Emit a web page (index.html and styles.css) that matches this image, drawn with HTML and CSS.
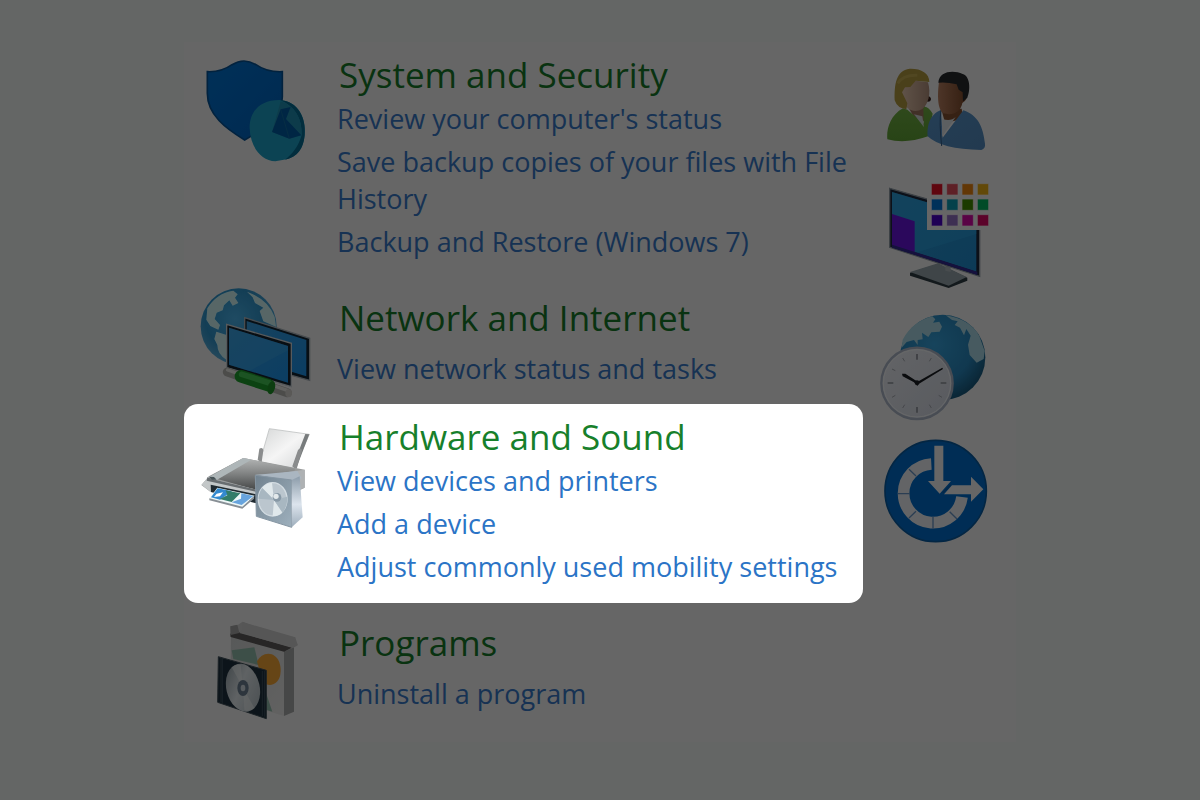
FILE: index.html
```html
<!DOCTYPE html>
<html lang="en">
<head>
<meta charset="utf-8">
<title>Control Panel</title>
<link rel="stylesheet" href="styles.css">
</head>
<body>
<main class="panel">
  <div class="categories">
    <section class="category">
      <svg class="icon icon-tall" viewBox="18 6 360 384" aria-hidden="true">
        <defs><linearGradient id="sh" x1="0" y1="0" x2="1" y2="1"><stop offset="0" stop-color="#0079dc"/><stop offset="1" stop-color="#0068c8"/></linearGradient></defs>
        <path d="M52 95Q94 97 126 74Q162 52 198 74Q230 97 277 95V170C277 230 220 268 164 300C108 266 52 225 52 160Z" fill="url(#sh)" stroke="#07569b" stroke-width="5"/>
        <path d="M270 180C325 184 349 235 344 285C340 330 316 350 290 358L256 364C212 362 181 320 179 265C178 215 210 179 270 180Z" fill="#1fa9d0"/>
        <path d="M270 180C325 184 349 235 344 285C340 335 315 353 285 359C307 342 325 320 335 285C337 235 314 198 270 180Z" fill="#06709a"/>
        <path d="M272 184C314 198 337 235 334 286L298 296L246 276Z" fill="#2195b8"/>
        <path d="M272 208L302 201L288 237L334 286L298 296L246 276Z" fill="#005fab"/>
        <path d="M272 208L298 296" stroke="#187aa8" stroke-width="2"/>
      </svg>
      <div class="category-text">
        <h2><a href="#system">System and Security</a></h2>
        <ul>
          <li><a href="#status">Review your computer's status</a></li>
          <li><a href="#history">Save backup copies of your files with File History</a></li>
          <li><a href="#backup">Backup and Restore (Windows 7)</a></li>
        </ul>
      </div>
    </section>

    <section class="category category-compact">
      <svg class="icon bright" viewBox="18 30 360 336" aria-hidden="true">
        <defs>
          <radialGradient id="gl" cx=".45" cy=".4" r=".65"><stop offset="0" stop-color="#3c90bd"/><stop offset=".6" stop-color="#2678a4"/><stop offset="1" stop-color="#5794b4"/></radialGradient>
          <linearGradient id="scr" x1="0" y1="0" x2="1" y2="1"><stop offset="0" stop-color="#2c80b5"/><stop offset="1" stop-color="#1676bd"/></linearGradient>
        </defs>
        <circle cx="146" cy="154" r="114" fill="url(#gl)"/>
        <path d="M52 100Q80 54 130 47L143 58L135 68L145 84L128 92L118 76L102 91L98 106L80 113L74 132L90 150L85 164L61 153L49 134ZM79 170L110 180V255Q82 238 82 210L73 192ZM171 50Q235 73 254 126L258 155L220 139L209 108L220 98L195 84L188 67Z" fill="#a8cbd5"/>
        <path d="M164 128L359 190V316L164 262Z" fill="#0e1d29" stroke="#8a9298" stroke-width="4"/>
        <path d="M170 138L349 195V304L170 250Z" fill="url(#scr)"/>
        <path d="M110 148L304 205V335L110 278Z" fill="#101c26" stroke="#a7adb0" stroke-width="4"/>
        <path d="M117 158L294 213V323L117 269Z" fill="url(#scr)"/>
        <path d="M117 158L294 213V226L178 288L117 269Z" fill="#338abd" opacity=".45"/>
        <path d="M112 291L292 353" stroke="#92928f" stroke-width="27" stroke-linecap="round"/>
        <path d="M113 285L292 346" stroke="#bdbdb9" stroke-width="10" stroke-linecap="round"/>
        <path d="M153 304L236 331" stroke="#188023" stroke-width="38" stroke-linecap="round"/>
        <path d="M155 298L238 324" stroke="#36a044" stroke-width="17" stroke-linecap="round"/>
        <ellipse cx="244" cy="338" rx="11" ry="20" fill="#19761f" transform="rotate(15 244 338)"/>
        <ellipse cx="296" cy="355" rx="10" ry="12" fill="#adaba7"/>
      </svg>
      <div class="category-text">
        <h2><a href="#network">Network and Internet</a></h2>
        <ul><li><a href="#network-status">View network status and tasks</a></li></ul>
      </div>
    </section>

    <section class="category spotlight">
      <svg class="icon icon-tall" viewBox="48 12 360 384" aria-hidden="true">
        <defs>
          <linearGradient id="lid" x1="0" y1="0" x2="0" y2="1"><stop offset="0" stop-color="#b3b5b5"/><stop offset=".45" stop-color="#858787"/><stop offset="1" stop-color="#454747"/></linearGradient>
          <linearGradient id="paper" x1="0" y1="0" x2="1" y2="1"><stop offset="0" stop-color="#d5d7d7"/><stop offset=".5" stop-color="#f5f5f5"/><stop offset="1" stop-color="#d2d4d5"/></linearGradient>
          <linearGradient id="spk" x1="0" y1="0" x2="1" y2="1"><stop offset="0" stop-color="#71828f"/><stop offset="1" stop-color="#9eb0bd"/></linearGradient>
          <linearGradient id="side" x1="0" y1="0" x2="0" y2="1"><stop offset="0" stop-color="#8c9caa"/><stop offset=".55" stop-color="#dce4ed"/><stop offset="1" stop-color="#9eaebc"/></linearGradient>
        </defs>
        <path d="M268 86L388 103L342 205L239 188Z" fill="url(#paper)" stroke="#b4b6b6" stroke-width="2"/>
        <path d="M388 103L348 206L338 200L376 102Z" fill="#777b7c"/>
        <path d="M233 180L238 146Q248 140 250 151L245 187ZM337 199L354 150Q364 141 366 151L350 207Z" fill="#8a8c8d"/>
        <path d="M64 255L88 228L190 174L374 209V263L330 285L245 310L232 291L92 276Z" fill="#999b9b"/>
        <path d="M88 230L190 174L347 206L327 238L230 270Z" fill="url(#lid)"/>
        <path d="M88 230L190 174L214 179L110 240Z" fill="#aeb6b8"/>
        <path d="M65 254L86 229L112 241L230 269V292L93 256V277Z" fill="#c3c7c8"/>
        <path d="M82 232L108 240L230 269V276L80 242Z" fill="#686d70"/>
        <path d="M92 254L230 283V310L93 276Z" fill="#202a30"/>
        <path d="M86 230L102 231L110 239L96 239Z" fill="#475357"/>
        <path d="M310 218L374 209V263L334 278Z" fill="#aeb1b3"/>
        <path d="M112 263L224 287L187 323L88 295Z" fill="#edf7f7"/>
        <path d="M113 265L156 274L120 299L93 292Z" fill="#3389cf"/>
        <path d="M137 271L181 280L155 306L119 297L142 286Z" fill="#327c69"/>
        <path d="M184 280L220 288L185 315L155 307L183 296Z" fill="#68a4dd"/>
        <path d="M110 281L129 277L120 289L102 291Z" fill="#fff"/>
        <path d="M88 295L187 320L222 289V296L187 326L88 301Z" fill="#888f95"/>
        <path d="M225 224L256 222L352 213L365 235L334 242Z" fill="#aab6c1"/>
        <path d="M226 226L335 240V382L229 349Z" fill="url(#spk)" stroke="#8595a2" stroke-width="3"/>
        <path d="M335 240L359 229L368 352L335 382Z" fill="url(#side)"/>
        <ellipse cx="278" cy="298" rx="43" ry="50" fill="#bbc6ce" stroke="#d3dce2" stroke-width="4"/>
        <path d="M282 300L246 264A43 50 0 0 1 276 248ZM282 300L307 338A43 50 0 0 1 278 348Z" fill="#e0e8eb"/>
        <path d="M282 300L235 296Q238 274 247 264ZM282 300L321 290Q325 315 308 338Z" fill="#a8b7c1"/>
        <circle cx="291" cy="292" r="13" fill="#8798a5"/><circle cx="288" cy="289" r="8" fill="#e3e9eb"/>
      </svg>
      <div class="category-text">
        <h2><a href="#hardware">Hardware and Sound</a></h2>
        <ul>
          <li><a href="#devices">View devices and printers</a></li>
          <li><a href="#add">Add a device</a></li>
          <li><a href="#mobility">Adjust commonly used mobility settings</a></li>
        </ul>
      </div>
    </section>

    <section class="category category-compact">
      <svg class="icon bright" viewBox="-12 30 360 336" aria-hidden="true">
        <defs>
          <linearGradient id="box" x1="0" y1="0" x2="1" y2="1"><stop offset="0" stop-color="#a8aaaa"/><stop offset="1" stop-color="#bcbcbb"/></linearGradient>
          <linearGradient id="disc" x1="0" y1="0" x2="1" y2="1"><stop offset="0" stop-color="#737e84"/><stop offset=".45" stop-color="#b7bdc0"/><stop offset="1" stop-color="#8c969b"/></linearGradient>
        </defs>
        <path d="M93 108L252 153V348L91 298Z" fill="url(#box)"/>
        <path d="M252 153L282 141V335L252 348Z" fill="#878989"/>
        <path d="M91 79L113 75L128 65L294 132L292 137L256 154L91 111Z" fill="#a7a7a7"/>
        <path d="M91 101L118 97L275 143L252 155L92 111Z" fill="#4b4949"/>
        <path d="M128 66L286 112L292 132L281 143L118 99L127 88Z" fill="#a5a5a5"/>
        <path d="M91 79L112 74L118 99L92 105Z" fill="#858585"/>
        <path d="M95 151L163 142L176 195L100 177ZM190 255L217 335L193 328Z" fill="#76988a"/>
        <path d="M205 161C235 162 247 196 240 228C233 254 208 263 187 246L171 184Q183 161 205 161Z" fill="#c4842c"/>
        <path d="M55 170L199 211V356L53 307Z" fill="#192832" stroke="#35424a" stroke-width="3"/>
        <path d="M63 174V307M67 174V309M187 213V348M194 213V350" stroke="#3c4b56" stroke-width="2"/>
        <ellipse cx="129" cy="263" rx="50" ry="73" fill="url(#disc)" transform="rotate(-13 129 263)"/>
        <path d="M129 263L95 202Q109 190 122 195ZM129 263L163 324Q148 338 133 329Z" fill="#c4c8c8" opacity=".55"/>
        <ellipse cx="129" cy="264" rx="17" ry="24" fill="#576775"/><ellipse cx="129" cy="264" rx="7" ry="10" fill="#a8afb4"/>
      </svg>
      <div class="category-text">
        <h2><a href="#programs">Programs</a></h2>
        <ul><li><a href="#uninstall">Uninstall a program</a></li></ul>
      </div>
    </section>
  </div>

  <nav class="shortcuts" aria-label="More categories">
    <a href="#accounts" aria-label="User Accounts">
      <svg class="bright" viewBox="30 0 360 360" width="120" height="120">
        <defs>
          <linearGradient id="f1" x1="0" x2="1"><stop offset="0" stop-color="#bba28e"/><stop offset="1" stop-color="#8e7363"/></linearGradient>
          <linearGradient id="f2" x1="0" x2="1"><stop offset="0" stop-color="#94664d"/><stop offset="1" stop-color="#623920"/></linearGradient>
          <linearGradient id="gr" x1="0" y1="0" x2="0" y2="1"><stop offset="0" stop-color="#5b8d36"/><stop offset="1" stop-color="#4d822b"/></linearGradient>
          <linearGradient id="bl" x1="0" y1="0" x2="1" y2="1"><stop offset="0" stop-color="#4677a3"/><stop offset="1" stop-color="#426f98"/></linearGradient>
        </defs>
        <path d="M172 136Q189 144 180 154Q170 158 163 149Z" fill="#2c1913"/>
        <path d="M113 169L164 163V214L133 203Z" fill="#7e5d4b"/>
        <path d="M99 175C60 196 49 238 52 268Q107 283 174 259L188 191Q173 166 160 171L161 221L112 179Z" fill="url(#gr)"/>
        <path d="M132 193L157 199L162 232Z" fill="#a7adab"/>
        <path d="M174 97C184 131 174 164 157 177Q132 191 109 171L91 125L113 89Z" fill="url(#f1)"/>
        <path d="M178 96C178 69 153 55 119 56C77 62 73 104 74 151Q82 175 109 178L112 160L96 127L105 112L121 111L137 92Z" fill="#8e7b33"/>
        <path d="M83 100Q100 74 142 76" stroke="#a89650" stroke-width="9" fill="none" opacity=".5"/>
        <path d="M214 178L275 176L280 207L225 218Z" fill="#684027"/>
        <path d="M213 180C177 194 171 229 173 259Q214 298 334 300Q347 295 345 281C339 230 325 197 280 181L218 263Z" fill="url(#bl)"/>
        <path d="M217 207Q243 215 257 201L216 260Z" fill="#b2b7bb"/>
        <path d="M213 181Q207 218 215 288" stroke="#294b6d" stroke-width="3" fill="none"/>
        <path d="M207 96L274 82L291 125Q294 149 277 159C272 186 249 198 220 190C202 179 202 132 207 96Z" fill="url(#f2)"/>
        <path d="M205 98C207 62 252 59 278 72C301 79 302 119 292 143L279 154L278 127L266 119L260 103Q229 95 205 98Z" fill="#1f2124"/>
      </svg>
    </a>
    <a href="#appearance" aria-label="Appearance and Personalization">
      <svg class="bright" viewBox="30 0 360 390" width="120" height="130">
        <defs><linearGradient id="mon" x1="0" y1="0" x2="1" y2="1"><stop offset="0" stop-color="#247cac"/><stop offset="1" stop-color="#1970a6"/></linearGradient></defs>
        <path d="M120 308L204 282L292 323V332L236 354L120 317Z" fill="#263137"/>
        <path d="M120 306L204 280L290 321L236 347Z" fill="#7a858a"/>
        <path d="M226 280H242V306L226 302Z" fill="#8a9397"/>
        <path d="M59 55L329 132V319L59 232Z" fill="#171f30" stroke="#747d85" stroke-width="4"/>
        <path d="M66 66L319 140V305L66 225Z" fill="url(#mon)"/>
        <path d="M319 140V192L135 249L66 225V66Z" fill="#268ab8" opacity=".4"/>
        <path d="M66 132L134 154V248L66 225Z" fill="#5310b2"/>
        <path d="M66 224L322 305V315L66 233Z" fill="#292175"/>
        <path d="M171 28H369V180H171Z" fill="#c6c6c6"/>
        <g stroke="#d1c5c8" stroke-width="2">
          <path fill="#b60d1e" d="M184 41h34v34h-34z"/><path fill="#b53e4a" d="M230 41h34v34h-34z"/><path fill="#bd6b0d" d="M276 41h34v34h-34z"/><path fill="#bc8c12" d="M322 41h34v34h-34z"/>
          <path fill="#005fac" d="M184 87h34v34h-34z"/><path fill="#087e91" d="M230 87h34v34h-34z"/><path fill="#347000" d="M276 87h34v34h-34z"/><path fill="#00914c" d="M322 87h34v34h-34z"/>
          <path fill="#3a00a1" d="M184 134h34v34h-34z"/><path fill="#765a9e" d="M230 134h34v34h-34z"/><path fill="#ab0784" d="M276 134h34v34h-34z"/><path fill="#af0751" d="M322 134h34v34h-34z"/>
        </g>
      </svg>
    </a>
    <a href="#clock" aria-label="Clock and Region">
      <svg class="bright" viewBox="30 0 360 375" width="120" height="125">
        <defs>
          <radialGradient id="gc" cx=".4" cy=".35" r=".7"><stop offset="0" stop-color="#2c83b1"/><stop offset=".65" stop-color="#206c98"/><stop offset="1" stop-color="#12445f"/></radialGradient>
          <linearGradient id="face" x1="0" y1="0" x2="1" y2="1"><stop offset="0" stop-color="#bec0c5"/><stop offset="1" stop-color="#aaaeb6"/></linearGradient>
        </defs>
        <circle cx="218" cy="172" r="128" fill="url(#gc)"/>
        <path d="M98 119Q127 65 187 49L196 58L189 68L208 65L216 80L209 95L184 97L175 111L156 98L158 118L143 120V135L132 120L110 126L95 143ZM227 46Q301 58 328 108L344 153L341 177L320 188L299 165L294 134L302 107L289 87L282 106L270 83L254 75L263 64L246 60Z" fill="#88aeb8"/>
        <circle cx="141" cy="250" r="107" fill="url(#face)" stroke="#8a92a0" stroke-width="7"/>
        <circle cx="141" cy="250" r="101" fill="none" stroke="#c5c8ce" stroke-width="3"/>
        <g stroke="#72757c" stroke-width="5"><path d="M141 162V179M141 321V338M53 249H70M212 249H229"/></g>
        <g stroke="#85888e" stroke-width="3"><path d="M98 174L104 184M184 174L178 184M66 207L76 212M206 212L216 207M66 292L76 286M206 286L216 292M98 324L104 314M184 324L178 314"/></g>
        <path d="M96 221L106 221L143 245L217 203L219 207L146 252L142 258L132 247L98 229Z" fill="#15171c"/>
        <circle cx="141" cy="248" r="7" fill="#15171c"/>
      </svg>
    </a>
    <a href="#ease" aria-label="Ease of Access">
      <svg class="bright" viewBox="30 0 360 390" width="120" height="130">
        <circle cx="197" cy="198" r="152" fill="#0058a4" stroke="#074982" stroke-width="5"/>
        <path d="M184 117A88 88 0 1 0 276 216" fill="none" stroke="#bfc1c4" stroke-width="35"/>
        <path d="M117 133L138 153M84 206H120M117 279L138 259M189 275V311M239 260L261 282" stroke="#52779f" stroke-width="4"/>
        <path d="M193 62H220V168H243L209 206L174 168H193Z" fill="#c4c5c6"/>
        <path d="M222 208L246 181H303V155L340 193L303 230V208Z" fill="#c4c5c6"/>
        <path d="M218 204L242 179" stroke="#074c8c" stroke-width="4"/>
      </svg>
    </a>
  </nav>
</main>
</body>
</html>
```

FILE: styles.css
```css
* {
  box-sizing: border-box;
}

body {
  margin: 0;
  min-height: 100vh;
  padding: 42px 0;
  background: #fafffc;
  font-family: "Open Sans", "Noto Sans", sans-serif;
}

.panel {
  display: grid;
  grid-template-columns: minmax(0, 1fr) 136px;
  column-gap: 17px;
  max-width: 832px;
  margin: 0 auto;
  padding-bottom: 20px;
  background: #fff;
}

.categories {
  display: flex;
  flex-direction: column;
  gap: 7px;
}

.category {
  display: grid;
  grid-template-columns: 120px minmax(0, 1fr);
  column-gap: 21px;
  padding-left: 12px;
  border-radius: 14px;
}

.icon {
  display: block;
  width: 120px;
  height: 112px;
  overflow: visible;
}

.icon-tall {
  height: 128px;
}

.bright {
  filter: brightness(1.3);
}

.category-text {
  padding: 11px 12px 18px 0;
}

.category-compact .category-text {
  padding-bottom: 10px;
}

h2 {
  margin: 0 0 3px;
  padding-left: 2px;
  font-size: 35px;
  font-weight: 400;
  line-height: 44px;
}

.category-compact h2 {
  margin-bottom: 10px;
}

ul {
  display: flex;
  flex-direction: column;
  gap: 6px;
  margin: 0;
  padding: 0;
  list-style: none;
  font-size: 27px;
  line-height: 37px;
}

a {
  color: #3a7ed0;
  text-decoration: none;
}

h2 a {
  color: #17802b;
}

.spotlight {
  position: relative;
  z-index: 1;
  background: #fff;
  box-shadow: 0 0 0 100vmax rgba(0, 0, 0, 0.6);
}

.spotlight li a {
  color: #2b74c6;
}

.shortcuts {
  display: flex;
  flex-direction: column;
  padding-top: 8px;
}

.shortcuts svg {
  display: block;
}
```
